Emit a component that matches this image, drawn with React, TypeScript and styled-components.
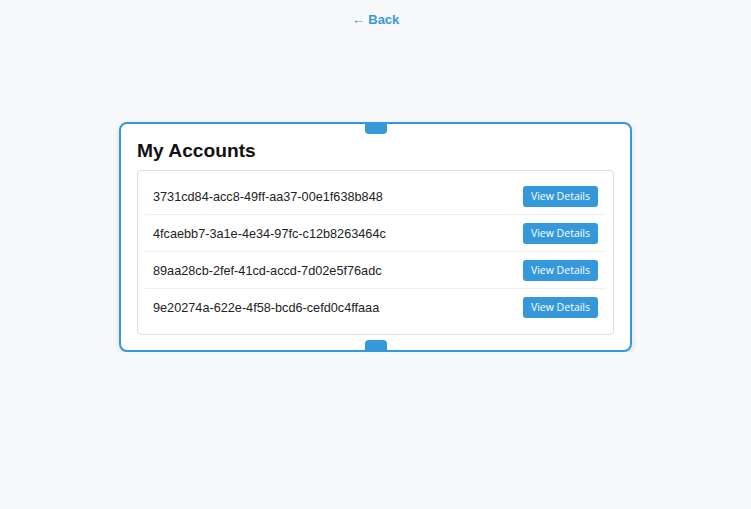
import React from "react";
import styled, { createGlobalStyle } from "styled-components";

const GlobalStyle = createGlobalStyle`
  html, body {
    margin: 0;
    padding: 0;
    background: #f8f9fa;
    font-family: "Liberation Sans", Arial, sans-serif;
  }
`;

const Page = styled.div`
  display: flex;
  flex-direction: column;
  align-items: center;
  padding-top: 12px;
`;

const BackLink = styled.a`
  font-size: 13px;
  line-height: 16px;
  font-weight: bold;
  color: #3498db;
  text-decoration: none;
`;

const Card = styled.div`
  position: relative;
  box-sizing: border-box;
  width: 513px;
  margin-top: 94px;
  padding: 15px 16px;
  background: #fff;
  border: 2px solid #3498db;
  border-radius: 8px;
  box-shadow: 0 2px 6px rgba(0, 0, 0, 0.12);
`;

const Handle = styled.span<{ $side: "top" | "bottom" }>`
  position: absolute;
  left: 50%;
  width: 22px;
  height: 11px;
  margin-left: -11px;
  background: #3498db;
  ${(p) =>
    p.$side === "top"
      ? "top: -1px; border-radius: 0 0 4px 4px;"
      : "bottom: -1px; border-radius: 4px 4px 0 0;"}
`;

const Title = styled.h2`
  margin: 0 0 8px;
  font-size: 19.2px;
  line-height: 23px;
  font-weight: bold;
  color: #111;
`;

const List = styled.ul`
  list-style: none;
  margin: 0;
  padding: 7px 7px 9px;
  border: 1px solid #ddd;
  border-radius: 4px;
  background: #fff;
`;

const Row = styled.li`
  display: flex;
  align-items: center;
  justify-content: space-between;
  height: 36px;
  padding: 0 8px;
  border-bottom: 1px solid #f0f0f0;
  &:last-child {
    border-bottom: none;
  }
`;

const AccountId = styled.span`
  padding-top: 2px;
  font-size: 12.7px;
  color: #222;
`;

const DetailsButton = styled.button`
  height: 21px;
  width: 75px;
  padding: 0;
  border: none;
  border-radius: 3px;
  background: #3498db;
  color: #fff;
  font-family: "Open Sans", "Noto Sans", sans-serif;
  font-size: 10.5px;
  cursor: pointer;
`;

const accounts = [
  "3731cd84-acc8-49ff-aa37-00e1f638b848",
  "4fcaebb7-3a1e-4e34-97fc-c12b8263464c",
  "89aa28cb-2fef-41cd-accd-7d02e5f76adc",
  "9e20274a-622e-4f58-bcd6-cefd0c4ffaaa",
];

export default function App() {
  return (
    <>
      <GlobalStyle />
      <Page>
        <BackLink href="#">← Back</BackLink>
        <Card>
          <Handle $side="top" />
          <Title>My Accounts</Title>
          <List>
            {accounts.map((id) => (
              <Row key={id}>
                <AccountId>{id}</AccountId>
                <DetailsButton>View Details</DetailsButton>
              </Row>
            ))}
          </List>
          <Handle $side="bottom" />
        </Card>
      </Page>
    </>
  );
}
